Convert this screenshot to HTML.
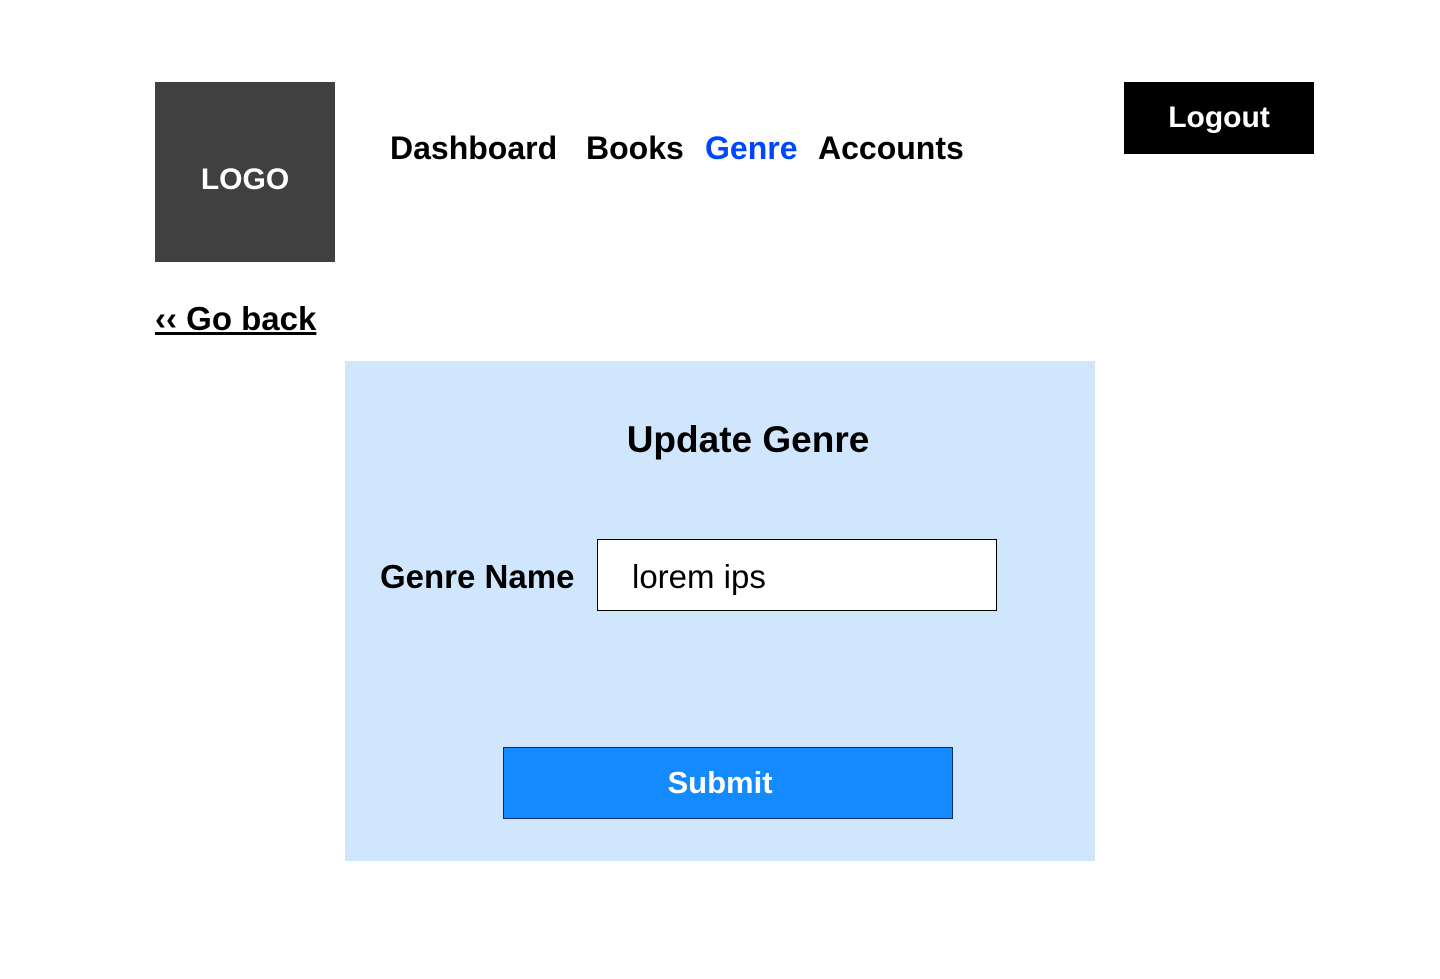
<!DOCTYPE html>
<html><head><meta charset="utf-8"><style>
body{margin:0;width:1440px;height:979px;background:#fff;position:relative;font-family:"Liberation Sans",sans-serif;overflow:hidden}
.a{position:absolute;white-space:nowrap}
.b{font-weight:bold}
</style></head><body>
<div class="a" style="left:155px;top:82px;width:180px;height:180px;background:#404040"></div>
<div class="a b" style="left:155px;top:163px;width:180px;text-align:center;color:#fff;font-size:30px">LOGO</div>
<div class="a b" style="left:390px;top:130px;font-size:32px;color:#000">Dashboard</div>
<div class="a b" style="left:586px;top:130px;font-size:32px;color:#000">Books</div>
<div class="a b" style="left:705px;top:130px;font-size:32px;color:#0046ff">Genre</div>
<div class="a b" style="left:818px;top:130px;font-size:32px;color:#000">Accounts</div>
<div class="a b" style="left:1124px;top:82px;width:190px;height:72px;background:#000;color:#fff;font-size:30px;display:flex;align-items:center;justify-content:center">Logout</div>
<div class="a b" style="left:155px;top:300px;font-size:33px;text-decoration:underline;color:#000">&lsaquo;&lsaquo; Go back</div>
<div class="a" style="left:345px;top:361px;width:750px;height:500px;background:#d0e6fd"></div>
<div class="a b" style="left:545px;top:419px;width:406px;text-align:center;font-size:37px">Update Genre</div>
<div class="a b" style="left:380px;top:558px;font-size:33px">Genre Name</div>
<div class="a" style="left:597px;top:539px;width:398px;height:70px;background:#fff;border:1px solid #000"></div>
<div class="a" style="left:632px;top:558px;font-size:33px">lorem ips</div>
<div class="a" style="left:503px;top:747px;width:448px;height:70px;background:#148aff;border:1px solid #0a2a6a"></div>
<div class="a b" style="left:495px;top:765px;width:450px;text-align:center;color:#fff;font-size:31px">Submit</div>
</body></html>
